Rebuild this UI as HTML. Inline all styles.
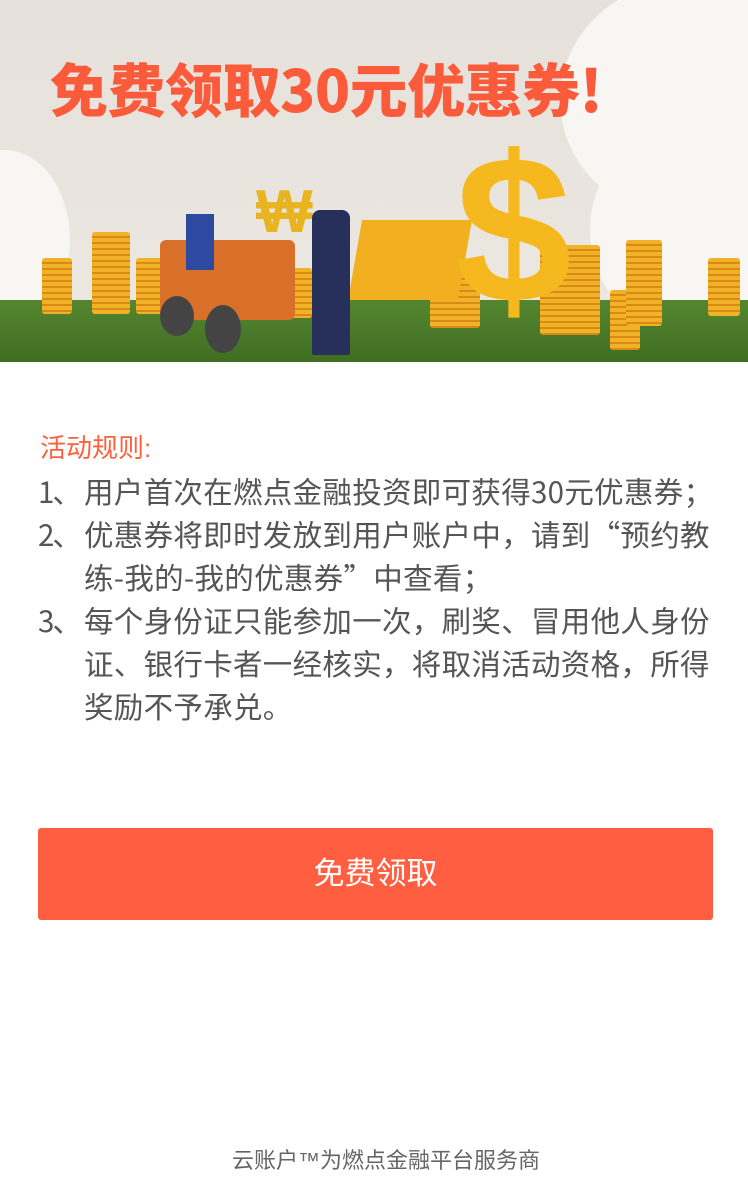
<!DOCTYPE html>
<html><head><meta charset="utf-8">
<style>
*{margin:0;padding:0;box-sizing:border-box}
body{width:748px;height:1202px;background:#fff;font-family:"Liberation Sans","Noto Sans CJK SC",sans-serif;position:relative;overflow:hidden}
.banner{position:absolute;left:0;top:0;width:748px;height:362px;background:linear-gradient(#e6e1da,#ece8e2);overflow:hidden}
.cloud{position:absolute;background:#f7f6f3;border-radius:50%}
.grass{position:absolute;left:0;top:300px;width:748px;height:62px;background:linear-gradient(#55862f,#3f6e22)}
.coin{position:absolute;background:repeating-linear-gradient(#f2b227 0 4px,#d98a14 4px 6px);border-radius:3px}
.title{position:absolute;left:50px;top:52px;font-size:58px;font-weight:900;color:#fb5b3a;letter-spacing:-0.5px;font-family:"Noto Sans CJK SC",sans-serif;line-height:70px}
.h{position:absolute;left:40px;top:430px;font-size:26px;color:#ff5f3c;line-height:36px}
.rules{position:absolute;left:38px;top:470px;width:676px;font-size:29.5px;letter-spacing:0.3px;color:#555;line-height:43px;font-family:"Noto Sans CJK SC",sans-serif}
.r{display:flex}
.n{width:46px;flex:none;letter-spacing:-2px}
.btn{position:absolute;left:38px;top:828px;width:675px;height:92px;background:#ff5f40;border-radius:3px;color:#fff;font-size:31px;text-align:center;line-height:92px}
.foot{position:absolute;left:0;width:748px;top:1146px;text-align:center;font-size:22px;color:#666;line-height:30px;padding-left:24px}
</style></head><body>
<div class="banner">
<div class="cloud" style="left:560px;top:-20px;width:260px;height:240px"></div>
<div class="cloud" style="left:590px;top:120px;width:220px;height:220px"></div>
<div class="cloud" style="left:-60px;top:150px;width:130px;height:180px"></div>
<div class="grass"></div>
<div class="coin" style="left:42px;top:258px;width:30px;height:56px"></div>
<div class="coin" style="left:92px;top:232px;width:38px;height:82px"></div>
<div class="coin" style="left:136px;top:258px;width:28px;height:56px"></div>
<div class="coin" style="left:284px;top:268px;width:28px;height:50px"></div>
<div class="coin" style="left:430px;top:268px;width:50px;height:60px"></div>
<div class="coin" style="left:540px;top:245px;width:60px;height:90px"></div>
<div class="coin" style="left:610px;top:290px;width:30px;height:60px"></div>
<div class="coin" style="left:626px;top:240px;width:36px;height:86px"></div>
<div class="coin" style="left:708px;top:258px;width:32px;height:58px"></div>
<div style="position:absolute;left:355px;top:220px;width:110px;height:80px;background:#f2b020;transform:skewX(-10deg)"></div>
<div style="position:absolute;left:455px;top:130px;font-size:210px;font-weight:900;color:#f5b81e;line-height:200px;font-family:'Liberation Sans',sans-serif">$</div>
<div style="position:absolute;left:256px;top:182px;font-size:60px;font-weight:900;color:#e8b520;line-height:60px">₩</div>
<div style="position:absolute;left:160px;top:240px;width:135px;height:80px;background:#d9702a;border-radius:6px"></div>
<div style="position:absolute;left:160px;top:296px;width:34px;height:40px;background:#444;border-radius:50%"></div>
<div style="position:absolute;left:205px;top:305px;width:36px;height:48px;background:#444;border-radius:50%"></div>
<div style="position:absolute;left:312px;top:210px;width:38px;height:145px;background:#27305a;border-radius:8px 8px 2px 2px"></div>
<div style="position:absolute;left:186px;top:214px;width:28px;height:56px;background:#2e4aa0"></div>
</div>
<div class="title">免费领取30元优惠券!</div>
<div class="h">活动规则:</div>
<div class="rules">
<div class="r"><span class="n">1、</span><span>用户首次在燃点金融投资即可获得30元优惠券；</span></div>
<div class="r"><span class="n">2、</span><span>优惠券将即时发放到用户账户中，请到“预约教练-我的-我的优惠券”中查看；</span></div>
<div class="r"><span class="n">3、</span><span>每个身份证只能参加一次，刷奖、冒用他人身份证、银行卡者一经核实，将取消活动资格，所得奖励不予承兑。</span></div>
</div>
<div class="btn">免费领取</div>
<div class="foot">云账户™为燃点金融平台服务商</div>
</body></html>
